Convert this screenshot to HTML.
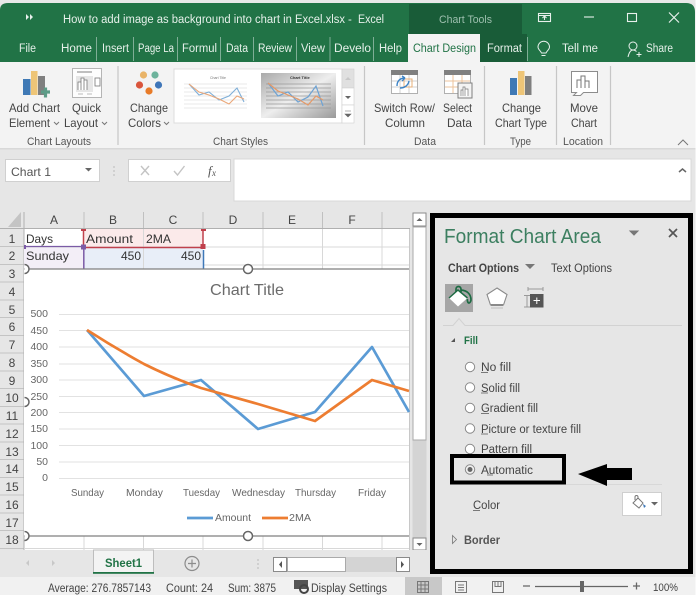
<!DOCTYPE html>
<html><head><meta charset="utf-8"><title>Excel</title>
<style>
html,body{margin:0;padding:0;background:#fff}
svg{display:block;font-family:"Liberation Sans",sans-serif;filter:blur(.35px)}
svg text{white-space:pre}
.r text{font-size:12px;fill:#444}
.g text{font-size:11px;fill:#555}
.tab text{font-size:11.5px;fill:#e6f0ea}
.hd text{font-size:12px;fill:#444;text-anchor:middle}
.ax text{font-size:10.5px;fill:#666}
.ay text{font-size:10.5px;fill:#666;text-anchor:end}
.opt text{font-size:11.5px;fill:#444}
.st text{font-size:11.500px;fill:#444}
</style></head>
<body>
<svg width="700" height="595" viewBox="0 0 700 595" xmlns="http://www.w3.org/2000/svg">
<rect width="700" height="595" fill="#e6e6e6"/>
<!-- title bar -->
<path d="M0 62V10Q0 3 8 3H686Q695 3 695 12V62Z" fill="#217346"/>
<rect x="0" y="0" width="700" height="3" fill="#e8e8e8"/>
<rect x="409" y="4" width="113" height="58" fill="#195c38"/>
<rect x="522" y="34" width="5" height="28" fill="#195c38"/>
<path d="M26 14l3 3-3 3zM30 14l3 3-3 3z" fill="#e8f0ec"/>
<text x="63" y="23" font-size="11.5" fill="#e6f0ea" textLength="282" lengthAdjust="spacingAndGlyphs">How to add image as background into chart in Excel.xlsx</text>
<text x="348" y="23" font-size="11.5" fill="#e6f0ea">-</text>
<text x="358" y="23" font-size="11.5" fill="#e6f0ea" textLength="26" lengthAdjust="spacingAndGlyphs">Excel</text>
<text x="439" y="23" font-size="11" fill="#9dbfae" textLength="53" lengthAdjust="spacingAndGlyphs">Chart Tools</text>
<!-- window controls -->
<g fill="none" stroke="#e8f0ec" stroke-width="1.1">
<rect x="538.5" y="13.5" width="12" height="8"/><path d="M538 15.500h13M544.500 20v-4M542.500 18l2-2 2 2"/>
<path d="M584 17h10"/>
<rect x="627.5" y="13.5" width="9" height="8"/>
<path d="M669 12.500l10 10M679 12.500l-10 10" stroke-width="1.200"/>
</g>
<!-- tabs -->
<rect x="408" y="34" width="72" height="29" fill="#f3f3f3"/>
<g class="tab">
<text x="19" y="52" textLength="17" lengthAdjust="spacingAndGlyphs">File</text>
<text x="61" y="52" textLength="31" lengthAdjust="spacingAndGlyphs">Home</text>
<text x="102" y="52" textLength="27" lengthAdjust="spacingAndGlyphs">Insert</text>
<text x="138" y="52" textLength="36" lengthAdjust="spacingAndGlyphs">Page La</text>
<text x="182" y="52" textLength="35" lengthAdjust="spacingAndGlyphs">Formul</text>
<text x="226" y="52" textLength="22" lengthAdjust="spacingAndGlyphs">Data</text>
<text x="258" y="52" textLength="34" lengthAdjust="spacingAndGlyphs">Review</text>
<text x="301" y="52" textLength="24" lengthAdjust="spacingAndGlyphs">View</text>
<text x="334" y="52" textLength="37" lengthAdjust="spacingAndGlyphs">Develo</text>
<text x="379" y="52" textLength="23" lengthAdjust="spacingAndGlyphs">Help</text>
<text x="413" y="52" textLength="63" lengthAdjust="spacingAndGlyphs" style="fill:#217346">Chart Design</text>
<text x="487" y="52" textLength="35" lengthAdjust="spacingAndGlyphs">Format</text>
<text x="562" y="52" textLength="36" lengthAdjust="spacingAndGlyphs">Tell me</text>
<text x="646" y="52" textLength="27" lengthAdjust="spacingAndGlyphs">Share</text>
</g>
<path d="M96.500 37v24M133.500 37v24M177.500 37v24M220.500 37v24M253.500 37v24M296.500 37v24M330 37v24M373.500 37v24M527.500 37v24" stroke="#7fae96" stroke-width="1"/>
<g fill="none" stroke="#e8f0ec" stroke-width="1">
<path d="M541.500 53c-1-2.500-3.500-3.500-3.500-6a5.700 5.700 0 0 1 11.500 0c0 2.500-2.500 3.500-3.500 6zM541.500 55.500h4"/>
<circle cx="633" cy="46" r="4"/><path d="M628 57c1-4.500 2.500-7 5-7 1.500 0 2.500.5 3.500 1.500M639 52v5M636.500 54.500h5"/>
</g>
<!-- ribbon -->
<rect x="0" y="62" width="700" height="87" fill="#f3f3f3"/>
<rect x="0" y="148" width="700" height="1.500" fill="#d8d8d8"/>
<path d="M118 66v79M364.500 66v79M484.500 66v79M556.500 66v79M610.500 66v79" stroke="#c6c6c6" stroke-width="1.200"/>
<!-- add chart -->
<rect x="23" y="79" width="7.500" height="16" fill="#3f79b5"/>
<rect x="31" y="71" width="6.500" height="24" fill="#eec577"/>
<rect x="38" y="76" width="7" height="19" fill="#7f7f7f"/>
<path d="M41 92h9M45.500 87.500v10" stroke="#5d9c87" stroke-width="3.200"/>
<!-- quick layout -->
<rect x="72.500" y="68.500" width="29" height="29" fill="#fdfdfd" stroke="#b5b5b5"/>
<path d="M77 72h15" stroke="#aaa" stroke-width="1.500"/>
<rect x="76" y="76" width="17" height="16" fill="#e6e6e6"/>
<path d="M78 90V82h3v8M81 90V78h3v12M84 90V80h3v10" fill="#fff" stroke="#777" stroke-width=".8"/>
<rect x="95" y="78" width="5" height="8" fill="#fff" stroke="#777" stroke-width=".8"/>
<path d="M78 94h5M87 94h5" stroke="#bbb"/>
<!-- change colors -->
<circle cx="143.500" cy="75" r="3.600" fill="#e9b468"/><circle cx="155" cy="75" r="3.600" fill="#6db39c"/>
<circle cx="139.500" cy="85" r="3.600" fill="#d9553c"/><circle cx="158.500" cy="85" r="3.600" fill="#3f76b8"/>
<circle cx="149" cy="91" r="3.600" fill="#e87b28"/>
<!-- gallery -->
<rect x="174" y="69" width="168" height="54" fill="#fff" stroke="#dcdcdc"/>
<rect x="179" y="74" width="75" height="44" fill="#fff"/>
<path d="M184 84h63M184 88h63M184 92h63M184 96h63M184 100h63M184 104h63M184 108h63" stroke="#e2e2e2" stroke-width=".8"/>
<path d="M189 84l10 11 10-3 10 8 10-4 8-8 7 14" fill="none" stroke="#7fafd8" stroke-width="1.100"/>
<path d="M189 84l10 8 10 3 10 4 10 5 8-8 7 3" fill="none" stroke="#eba778" stroke-width="1.100"/>
<text x="210" y="79" font-size="3.500" fill="#777">Chart Title</text>
<defs><linearGradient id="g1" x1="0" y1="0" x2="1" y2="1"><stop offset="0" stop-color="#aaa"/><stop offset=".5" stop-color="#eee"/><stop offset="1" stop-color="#999"/></linearGradient></defs>
<rect x="261" y="73" width="75" height="45" fill="url(#g1)"/>
<path d="M266 84h65M266 88h65M266 92h65M266 96h65M266 100h65M266 104h65M266 108h65" stroke="#999" stroke-width=".7"/>
<path d="M268 83l10 13 10-4 10 10 10-5 8-11 7 20" fill="none" stroke="#6ea3d4" stroke-width="1.200"/>
<path d="M268 83l10 8 10 4 10 4 10 6 8-9 7 4" fill="none" stroke="#e69966" stroke-width="1.200"/>
<text x="290" y="79" font-size="4" fill="#333" font-weight="bold">Chart Title</text>
<rect x="342" y="69" width="12" height="19" fill="#e0e0e0" stroke="#d0d0d0" stroke-width=".6"/>
<rect x="342" y="88" width="12" height="17" fill="#fff" stroke="#d0d0d0" stroke-width=".6"/>
<rect x="342" y="105" width="12" height="18" fill="#fff" stroke="#d0d0d0" stroke-width=".6"/>
<path d="M345 80l3-3 3 3z" fill="#c8c8c8"/><path d="M345 96l3 3 3-3z" fill="#666"/>
<path d="M345 114l3 3 3-3zM345 111h6" fill="#666" stroke="#666" stroke-width=".6"/>
<!-- switch row -->
<rect x="391.500" y="70.500" width="26" height="23" fill="#fff" stroke="#b0b0b0"/>
<rect x="391" y="70" width="27" height="5" fill="#808080"/>
<path d="M392 81h25M392 87h25M400 75v18M409 75v18" stroke="#d0d0d0"/>
<rect x="404" y="79" width="8" height="8" fill="none" stroke="#e9b079"/>
<path d="M397 86c0-5 3-8 8-8M405 78l-3-2M405 78l-3 3M400 88c4 0 8-2 9-7" fill="none" stroke="#3e84c6" stroke-width="1.400"/>
<!-- select data -->
<rect x="444.500" y="70.500" width="26" height="23" fill="#fff" stroke="#b0b0b0"/>
<rect x="444" y="70" width="27" height="5" fill="#808080"/>
<path d="M445 81h25M445 87h25M453 75v18M462 75v18" stroke="#ecc39b"/>
<rect x="458" y="83" width="14" height="15" fill="#f3f3f3" stroke="#7f7f7f"/>
<path d="M461 96v-6h2v6M463 96v-9h2v9M465 96v-7h3v7" fill="#fff" stroke="#777" stroke-width=".7"/>
<!-- change chart type -->
<rect x="510" y="78" width="7" height="17" fill="#3f79b5"/>
<rect x="518" y="71" width="6.500" height="24" fill="#eec577"/>
<rect x="525" y="76" width="6.500" height="19" fill="#7f7f7f"/>
<!-- move chart -->
<path d="M571.500 71.500h26v21h-14l-3 3h-7l3-3h-5z" fill="#fff" stroke="#8c8c8c"/>
<path d="M577 88V80h4v8M581 88V76h4v12M585 88V81h4v7" fill="#fff" stroke="#777"/>
<g class="r">
<text x="9" y="112" textLength="51" lengthAdjust="spacingAndGlyphs">Add Chart</text>
<text x="9" y="127" textLength="41" lengthAdjust="spacingAndGlyphs">Element</text>
<text x="72" y="112" textLength="29" lengthAdjust="spacingAndGlyphs">Quick</text>
<text x="64" y="127" textLength="34" lengthAdjust="spacingAndGlyphs">Layout</text>
<text x="130" y="112" textLength="38" lengthAdjust="spacingAndGlyphs">Change</text>
<text x="128" y="127" textLength="33" lengthAdjust="spacingAndGlyphs">Colors</text>
<text x="374" y="112" textLength="61" lengthAdjust="spacingAndGlyphs">Switch Row/</text>
<text x="385" y="127" textLength="40" lengthAdjust="spacingAndGlyphs">Column</text>
<text x="443" y="112" textLength="29" lengthAdjust="spacingAndGlyphs">Select</text>
<text x="447" y="127" textLength="25" lengthAdjust="spacingAndGlyphs">Data</text>
<text x="502" y="112" textLength="39" lengthAdjust="spacingAndGlyphs">Change</text>
<text x="495" y="127" textLength="52" lengthAdjust="spacingAndGlyphs">Chart Type</text>
<text x="570" y="112" textLength="28" lengthAdjust="spacingAndGlyphs">Move</text>
<text x="571" y="127" textLength="26" lengthAdjust="spacingAndGlyphs">Chart</text>
</g>
<path d="M54 122l2.500 2.500 2.500-2.500M102 122l2.500 2.500 2.500-2.500M164 122l2.500 2.500 2.500-2.500M678 145l5-5 5 5" fill="none" stroke="#777"/>
<g class="g">
<text x="27" y="145" textLength="64" lengthAdjust="spacingAndGlyphs">Chart Layouts</text>
<text x="213" y="145" textLength="55" lengthAdjust="spacingAndGlyphs">Chart Styles</text>
<text x="414" y="145" textLength="22" lengthAdjust="spacingAndGlyphs">Data</text>
<text x="510" y="145" textLength="21" lengthAdjust="spacingAndGlyphs">Type</text>
<text x="563" y="145" textLength="40" lengthAdjust="spacingAndGlyphs">Location</text>
</g>
<!-- formula bar -->
<rect x="5.500" y="159.500" width="94" height="22" fill="#fff" stroke="#d0d0d0"/>
<text x="11" y="176" font-size="12" fill="#555" textLength="40" lengthAdjust="spacingAndGlyphs">Chart 1</text>
<path d="M85 168l3.500 3.500 3.500-3.500z" fill="#666"/>
<path d="M114 166v10" stroke="#bbb" stroke-dasharray="2 2"/>
<rect x="128.500" y="159.500" width="102" height="22" fill="#fff" stroke="#d0d0d0"/>
<path d="M141 166l8 9M149 166l-8 9" stroke="#c4c4c4" stroke-width="1.400"/>
<path d="M174 171l3.500 4 7-9" fill="none" stroke="#c4c4c4" stroke-width="1.400"/>
<text x="208" y="175" font-size="13" font-style="italic" font-family="Liberation Serif" fill="#555">f</text><text x="212" y="176" font-size="9" font-style="italic" font-family="Liberation Serif" fill="#555">x</text>
<rect x="234" y="159" width="457" height="42" fill="#fff" stroke="#d8d8d8"/>
<path d="M679 172l3.500-3 3.500 3" fill="none" stroke="#666" stroke-width="1.500"/>
<!-- col headers -->
<path d="M21 212v15H8z" fill="#c4c4c4"/>
<rect x="24" y="228" width="386" height="322" fill="#fff"/>
<path d="M24 228.500H410M0 228.500H24" stroke="#b0b0b0"/>
<g class="hd">
<text x="54" y="224">A</text><text x="113" y="224">B</text><text x="173" y="224">C</text>
<text x="233" y="224">D</text><text x="292" y="224">E</text><text x="352" y="224">F</text>
</g>
<path d="M84 212v16M143.500 212v16M203 212v16M263 212v16M322.500 212v16M382 212v16" stroke="#c0c0c0"/>
<!-- rows -->
<g class="hd">
<text x="12" y="243">1</text><text x="12" y="260">2</text><text x="12" y="278">3</text><text x="12" y="296">4</text><text x="12" y="314">5</text><text x="12" y="331">6</text><text x="12" y="349">7</text><text x="12" y="367">8</text><text x="12" y="385">9</text><text x="12" y="402">10</text><text x="12" y="420">11</text><text x="12" y="438">12</text><text x="12" y="456">13</text><text x="12" y="473">14</text><text x="12" y="491">15</text><text x="12" y="509">16</text><text x="12" y="527">17</text><text x="12" y="544">18</text>
</g>
<path d="M0 246.500h24M0 264.500h24M0 282h24M0 300h24M0 317.500h24M0 335.500h24M0 353h24M0 371h24M0 388.500h24M0 406.500h24M0 424h24M0 442h24M0 459.500h24M0 477.500h24M0 495h24M0 513h24M0 530.500h24M0 548.500h24" stroke="#c4c4c4"/>
<path d="M24 212v338" stroke="#b0b0b0"/>
<!-- cells -->
<rect x="84" y="229" width="119" height="18" fill="#fbeaea"/>
<rect x="24" y="247" width="60" height="22" fill="#f3eef7"/>
<rect x="84" y="247" width="119" height="22" fill="#e8eef8"/>
<path d="M24 247h386M203 265h207M263 229v40M322.500 229v40M382 229v40M143.500 229v40" stroke="#d8d8d8"/>
<path d="M84 247.500H203" stroke="#c0404c" stroke-width="1.500"/>
<path d="M83.500 229v18M203 229v18" stroke="#c0404c" stroke-width="1.500"/>
<rect x="81" y="229" width="5" height="2" fill="#c0404c"/><rect x="201" y="229" width="5" height="2" fill="#c0404c"/>
<rect x="200.500" y="244" width="5" height="5" fill="#c0404c"/>
<path d="M24 246.500H81" stroke="#7b5ba6" stroke-width="1.200"/>
<path d="M83.800 249v20" stroke="#7b5ba6" stroke-width="1.500"/>
<path d="M203.500 250v19" stroke="#3e78b8" stroke-width="1.500"/>
<rect x="81" y="244.500" width="5" height="5" fill="#7b5ba6"/><rect x="24" y="245" width="2" height="4" fill="#7b5ba6"/>
<g font-size="12" fill="#333">
<text x="26" y="243" textLength="27" lengthAdjust="spacingAndGlyphs">Days</text>
<text x="86" y="243" textLength="47" lengthAdjust="spacingAndGlyphs">Amount</text>
<text x="146" y="243" textLength="25" lengthAdjust="spacingAndGlyphs">2MA</text>
<text x="26" y="260" textLength="43" lengthAdjust="spacingAndGlyphs">Sunday</text>
<text x="121" y="260" textLength="20" lengthAdjust="spacingAndGlyphs">450</text>
<text x="181" y="260" textLength="20" lengthAdjust="spacingAndGlyphs">450</text>
</g>
<!-- chart -->
<rect x="24" y="269" width="385.500" height="267" fill="#fff"/>
<path d="M84 536v14M143.500 536v14M203 536v14M263 536v14M322.500 536v14M382 536v14M24 548.500h386" stroke="#d8d8d8"/>
<path d="M24 269H409.500M24 536H409.500" stroke="#7f7f7f" stroke-width="1.300"/>
<path d="M409.500 229v321" stroke="#c8c8c8"/>
<text x="210" y="295" font-size="16" fill="#6b6b6b" textLength="74" lengthAdjust="spacingAndGlyphs">Chart Title</text>
<path d="M59 314.500H409M59 330.500H409M59 347H409M59 364H409M59 380H409M59 396.500H409M59 412.500H409M59 429H409M59 445.500H409M59 462H409M59 478.500H409" stroke="#e2e2e2"/>
<g class="ay">
<text x="48" y="317">500</text><text x="48" y="334">450</text><text x="48" y="350">400</text><text x="48" y="367">350</text><text x="48" y="383">300</text><text x="48" y="400">250</text><text x="48" y="416">200</text><text x="48" y="432">150</text><text x="48" y="449">100</text><text x="48" y="465">50</text><text x="48" y="481">0</text>
</g>
<g class="ax">
<text x="71" y="496" textLength="33" lengthAdjust="spacingAndGlyphs">Sunday</text>
<text x="126" y="496" textLength="37" lengthAdjust="spacingAndGlyphs">Monday</text>
<text x="183" y="496" textLength="37" lengthAdjust="spacingAndGlyphs">Tuesday</text>
<text x="232" y="496" textLength="53" lengthAdjust="spacingAndGlyphs">Wednesday</text>
<text x="295" y="496" textLength="41" lengthAdjust="spacingAndGlyphs">Thursday</text>
<text x="358" y="496" textLength="28" lengthAdjust="spacingAndGlyphs">Friday</text>
<text x="215" y="521" textLength="36" lengthAdjust="spacingAndGlyphs">Amount</text>
<text x="289" y="521" textLength="22" lengthAdjust="spacingAndGlyphs">2MA</text>
</g>
<path d="M87 330L144 396L201 380L258 429L315 412L372 347L409 412" fill="none" stroke="#5b9bd5" stroke-width="2.700" stroke-linejoin="round"/>
<path d="M87 330Q115 348 144 364Q172 378 201 388L258 404L315 421L372 380L409 391" fill="none" stroke="#ed7d31" stroke-width="2.700" stroke-linejoin="round"/>
<path d="M187 518h26" stroke="#5b9bd5" stroke-width="2.700"/>
<path d="M262 518h26" stroke="#ed7d31" stroke-width="2.700"/>
<g fill="#fff" stroke="#666" stroke-width="1.500">
<circle cx="248" cy="269" r="4.500"/><circle cx="248" cy="536" r="4.500"/>
<path d="M24.500 264.500a4.500 4.500 0 0 1 0 9M24.500 397.500a4.500 4.500 0 0 1 0 9M24.500 531.500a4.500 4.500 0 0 1 0 9"/>
</g>
<!-- v scroll -->
<rect x="412.500" y="213" width="14" height="337" fill="#d4d4d4"/>
<rect x="413" y="213" width="13" height="13" fill="#fff" stroke="#8a8a8a"/>
<path d="M416.500 221l3-3 3 3z" fill="#666"/>
<rect x="413" y="227" width="13" height="213" fill="#fff" stroke="#aaa"/>
<rect x="413" y="538" width="13" height="12" fill="#fff" stroke="#8a8a8a"/>
<path d="M416.500 543l3 3 3-3z" fill="#666"/>
<!-- sheet tabs -->
<rect x="0" y="550" width="430" height="25" fill="#e6e6e6"/>
<path d="M29 560l-3 3 3 3zM52 560l3 3-3 3z" fill="#c8c8c8"/>
<rect x="93.500" y="550" width="60" height="23" fill="#f3f3f3" stroke="#bdbdbd"/>
<rect x="93" y="572" width="61" height="1.800" fill="#217346"/>
<text x="105" y="567" font-size="12" font-weight="bold" fill="#217346" textLength="37" lengthAdjust="spacingAndGlyphs">Sheet1</text>
<circle cx="192" cy="563.500" r="7" fill="none" stroke="#8c8c8c" stroke-width="1.200"/>
<path d="M188 563.500h8M192 559.500v8" stroke="#8c8c8c" stroke-width="1.200"/>
<path d="M258 559v10" stroke="#bbb" stroke-dasharray="2 2"/>
<rect x="273.500" y="557.500" width="136" height="14" fill="#d4d4d4" stroke="#d4d4d4"/>
<rect x="273.500" y="557.500" width="13" height="14" fill="#fff" stroke="#8a8a8a"/>
<path d="M282 561l-3 3.500 3 3.500z" fill="#555"/>
<rect x="287.500" y="557.500" width="58" height="14" fill="#fff" stroke="#aaa"/>
<rect x="396.500" y="557.500" width="13" height="14" fill="#fff" stroke="#8a8a8a"/>
<path d="M401 561l3 3.500-3 3.500z" fill="#555"/>
<!-- status -->
<rect x="0" y="577" width="700" height="18" fill="#f1f1f1"/>
<rect x="405" y="577" width="37" height="18" fill="#c8c8c8"/>
<g class="st">
<text x="48" y="592" textLength="103" lengthAdjust="spacingAndGlyphs">Average: 276.7857143</text>
<text x="166" y="592" textLength="47" lengthAdjust="spacingAndGlyphs">Count: 24</text>
<text x="228" y="592" textLength="48" lengthAdjust="spacingAndGlyphs">Sum: 3875</text>
<text x="311" y="592" textLength="76" lengthAdjust="spacingAndGlyphs">Display Settings</text>
</g>
<rect x="294" y="580" width="14" height="9" fill="#555"/><circle cx="304" cy="589" r="4" fill="none" stroke="#444" stroke-width="2"/>
<path d="M417.500 581.500h11v11h-11zM417.500 585h11M417.500 589h11M421 581.500v11M425 581.500v11" fill="none" stroke="#777"/>
<path d="M455.500 581.500h11v11h-11zM458 585h6M458 587.500h6M458 590h6" fill="none" stroke="#777"/>
<path d="M492.500 581.500h11v11h-11zM498 581.500v5M495 581.500v5h6v-5" fill="none" stroke="#777"/>
<path d="M523 586h7M535 586.500h93M633 586h7M636.500 582.500v7" stroke="#666" stroke-width="1.300"/>
<rect x="580" y="581" width="4" height="11" fill="#666"/>
<text x="653" y="591" font-size="11" fill="#444" textLength="25" lengthAdjust="spacingAndGlyphs">100%</text>
<!-- format pane -->
<rect x="432.500" y="215.500" width="258" height="356" fill="#e6e6e6" stroke="#000" stroke-width="5"/>
<text x="444" y="243" font-size="20" fill="#3c7f60" textLength="157" lengthAdjust="spacingAndGlyphs">Format Chart Area</text>
<path d="M630 231l4 4 4-4z" fill="#777" stroke="#777"/>
<path d="M669 229l8 8M677 229l-8 8" stroke="#555" stroke-width="1.700"/>
<text x="448" y="272" font-size="11.5" font-weight="bold" fill="#444" textLength="71" lengthAdjust="spacingAndGlyphs">Chart Options</text>
<path d="M525 264h10l-5 5z" fill="#777"/>
<text x="551" y="272" font-size="11.5" fill="#444" textLength="61" lengthAdjust="spacingAndGlyphs">Text Options</text>
<rect x="445" y="284" width="28" height="28" fill="#a6a6a6"/>
<path d="M449 298l9-8 9.500 8-9.500 8.500z" fill="#fff"/>
<path d="M449 298l9-8 9.500 8" fill="none" stroke="#1d6b43" stroke-width="1.500"/>
<path d="M456 292v-3a2.500 2.500 0 0 1 5 0v3M461 290c6 .5 10 4 10 10 0 1-1 3-2 3s-2-2-1.500-4" fill="none" stroke="#1d6b43" stroke-width="1.700"/>
<path d="M497 288l10 6.500-3.500 10.500h-13l-3.500-10.500z" fill="#fff" stroke="#8a8a8a" stroke-width="1.100"/>
<path d="M491 305h12" stroke="#8a8a8a" stroke-width="2"/>
<path d="M491 308h12" stroke="#d2d2d2" stroke-width="2"/>
<path d="M528 289h15M528 287v4M543 287v4M524 295.500h6M524 307h6M527 295.500v11.500" stroke="#999" fill="none"/>
<rect x="530" y="294" width="13.500" height="13.500" fill="#555"/>
<path d="M533.500 300.500h6.500M536.800 297.500v6.500" stroke="#fff"/>
<path d="M443 325.500h10l6-7 6 7h217" fill="none" stroke="#d2d2d2"/>
<path d="M451 342l4-4v4z" fill="#555"/>
<text x="464" y="344" font-size="11" font-weight="bold" fill="#217346" textLength="14" lengthAdjust="spacingAndGlyphs">Fill</text>
<g fill="#fff" stroke="#8a8a8a">
<circle cx="470" cy="367" r="4.700"/><circle cx="470" cy="387.500" r="4.700"/><circle cx="470" cy="408" r="4.700"/><circle cx="470" cy="428.500" r="4.700"/><circle cx="470" cy="449" r="4.700"/><circle cx="470" cy="469.500" r="4.700" fill="#f0f0f0"/>
</g>
<circle cx="470" cy="469.500" r="2.500" fill="#666"/>
<g class="opt">
<text x="481" y="371" textLength="30" lengthAdjust="spacingAndGlyphs">No fill</text>
<text x="481" y="392" textLength="39" lengthAdjust="spacingAndGlyphs">Solid fill</text>
<text x="481" y="412" textLength="57" lengthAdjust="spacingAndGlyphs">Gradient fill</text>
<text x="481" y="433" textLength="100" lengthAdjust="spacingAndGlyphs">Picture or texture fill</text>
<text x="481" y="453" textLength="51" lengthAdjust="spacingAndGlyphs">Pattern fill</text>
<text x="481" y="474" textLength="52" lengthAdjust="spacingAndGlyphs">Automatic</text>
<text x="473" y="509" textLength="27" lengthAdjust="spacingAndGlyphs">Color</text>
</g>
<path d="M481 372.500h7M481 393h7M481 413.500h8M481 434h7M487 475h6M473 510.500h7" stroke="#555" stroke-width=".8"/>
<path d="M566 484.500H662" stroke="#d8d8d8"/>
<rect x="452" y="456" width="112" height="26.500" fill="none" stroke="#000" stroke-width="4"/>
<path d="M578 474L607 464V468H632V480H607V486Z" fill="#000"/>
<rect x="622.500" y="492.500" width="39" height="23" fill="#fff" stroke="#cfcfcf"/>
<path d="M633 503l5-5 5 5-4 5zM635 500v-3a1.500 1.500 0 0 1 3 0v2" fill="none" stroke="#777"/>
<path d="M643 504l3 2-2 2z" fill="#3e78b8"/>
<path d="M651 502l3.500 3.500 3.500-3.500z" fill="#666"/>
<text x="464" y="544" font-size="11.5" font-weight="bold" fill="#555" textLength="36" lengthAdjust="spacingAndGlyphs">Border</text>
<path d="M452.500 535.500l4 4-4 4z" fill="none" stroke="#777" stroke-width=".8"/>
<!-- right margin -->
<rect x="695.500" y="0" width="5" height="595" fill="#fff"/>
</svg>
</body></html>
